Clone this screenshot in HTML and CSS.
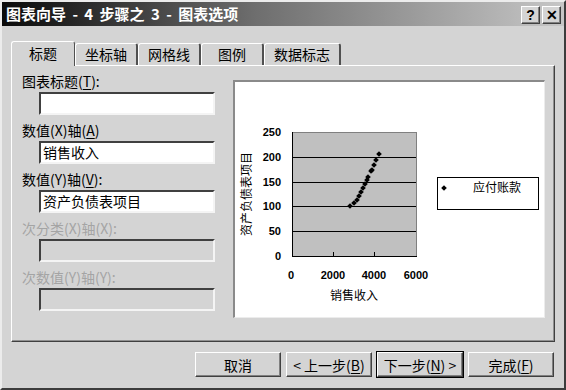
FILE: index.html
```html
<!DOCTYPE html>
<html lang="zh-CN">
<head>
	<meta charset="utf-8">
	<title>图表向导 - 4 步骤之 3 - 图表选项</title>
	<link rel="stylesheet" href="styles.css">
</head>
<body>
	<div class="dialog">
		<div class="titlebar">
			<span class="titlebar__text">图表向导 - 4 步骤之 3 - 图表选项</span>
			<div class="titlebar__buttons">
				<button class="caption-btn">?</button>
				<button class="caption-btn">✕</button>
			</div>
		</div>

		<div class="tabs">
			<div class="tab tab--active">标题</div>
			<div class="tab">坐标轴</div>
			<div class="tab">网格线</div>
			<div class="tab">图例</div>
			<div class="tab">数据标志</div>
		</div>

		<div class="panel">
			<div class="fields">
				<div class="field">
					<label class="field__label">图表标题(<u>T</u>):</label>
					<div class="field__input"></div>
				</div>
				<div class="field">
					<label class="field__label">数值(X)轴(<u>A</u>)</label>
					<div class="field__input">销售收入</div>
				</div>
				<div class="field">
					<label class="field__label">数值(Y)轴(<u>V</u>):</label>
					<div class="field__input">资产负债表项目</div>
				</div>
				<div class="field field--disabled">
					<label class="field__label">次分类(X)轴(X):</label>
					<div class="field__input"></div>
				</div>
				<div class="field field--disabled">
					<label class="field__label">次数值(Y)轴(Y):</label>
					<div class="field__input"></div>
				</div>
			</div>

			<div class="preview">
				<svg class="chart" width="309" height="235" viewBox="0 0 309 235">
					<defs>
						<path id="dot" d="M0,-2.8 L2.8,0 L0,2.8 L-2.8,0 Z" fill="#000"/>
					</defs>
					<!-- plot area -->
					<rect x="57.5" y="50.5" width="124" height="124" fill="#c0c0c0" stroke="#808080"/>
					<g stroke="#000" stroke-width="1">
						<line x1="57" y1="75.5" x2="181" y2="75.5"/>
						<line x1="57" y1="100.5" x2="181" y2="100.5"/>
						<line x1="57" y1="124.5" x2="181" y2="124.5"/>
						<line x1="57" y1="149.5" x2="181" y2="149.5"/>
						<line x1="57.5" y1="50" x2="57.5" y2="175"/>
						<line x1="57" y1="174.5" x2="182" y2="174.5"/>
						<line x1="98.5" y1="170" x2="98.5" y2="174"/>
						<line x1="139.5" y1="170" x2="139.5" y2="174"/>
					</g>
					<g class="chart__num" text-anchor="end">
						<text x="46" y="54">250</text>
						<text x="46" y="79">200</text>
						<text x="46" y="104">150</text>
						<text x="46" y="128">100</text>
						<text x="46" y="153">50</text>
						<text x="46" y="178">0</text>
					</g>
					<g class="chart__num" text-anchor="middle">
						<text x="56" y="197">0</text>
						<text x="98" y="197">2000</text>
						<text x="139" y="197">4000</text>
						<text x="181" y="197">6000</text>
					</g>
					<text class="chart__title" x="119" y="218" text-anchor="middle">销售收入</text>
					<text class="chart__title" transform="translate(16 112) rotate(-90)" text-anchor="middle">资产负债表项目</text>
					<!-- data points -->
					<use href="#dot" x="115" y="124"/>
					<use href="#dot" x="119" y="121"/>
					<use href="#dot" x="122" y="118"/>
					<use href="#dot" x="124" y="114"/>
					<use href="#dot" x="126" y="110"/>
					<use href="#dot" x="128" y="106"/>
					<use href="#dot" x="130" y="102"/>
					<use href="#dot" x="132" y="98"/>
					<use href="#dot" x="133" y="95"/>
					<use href="#dot" x="136" y="89"/>
					<use href="#dot" x="137" y="88"/>
					<use href="#dot" x="139" y="83"/>
					<use href="#dot" x="141" y="78"/>
					<use href="#dot" x="144" y="72"/>
					<!-- legend -->
					<rect x="202.5" y="95.5" width="101" height="32" fill="#fff" stroke="#000"/>
					<use href="#dot" x="209" y="106"/>
					<text class="chart__legend" x="238" y="110">应付账款</text>
				</svg>
			</div>
		</div>

		<div class="buttons">
			<button class="btn">取消</button>
			<button class="btn">&lt; 上一步(<u>B</u>)</button>
			<button class="btn btn--default">下一步(<u>N</u>) &gt;</button>
			<button class="btn">完成(<u>F</u>)</button>
		</div>
	</div>
</body>
</html>
```

FILE: styles.css
```css
/* PAGE */
* {
	box-sizing: border-box;
}
body {
	background: #d4d4d4;
	font-family: "Noto Sans CJK SC", "Liberation Sans", sans-serif;
	font-size: 14px;
	margin: 0;
}
button {
	font-family: inherit;
	font-size: inherit;
	color: #000;
	padding: 0;
}
u {
	text-decoration-thickness: 1px;
	text-underline-offset: 2px;
}

/* WINDOW */
.dialog {
	background: #d4d4d4;
	border: 2px solid;
	border-color: #ececec #3c3c3c #3c3c3c #ececec;
	display: flex;
	flex-direction: column;
	height: 390px;
	width: 566px;
}
.titlebar {
	align-items: center;
	background: linear-gradient(to right, #0a0a0a 0%, #6e6e6e 45%, #c6c6c6 100%);
	display: flex;
	height: 24px;
	justify-content: space-between;
	padding: 0 3px 0 4px;
}
.titlebar__text {
	color: #fff;
	font-size: 15px;
	font-weight: bold;
	line-height: 18px;
	word-spacing: 3px;
}
.titlebar__buttons {
	display: flex;
	gap: 2px;
	margin-top: 2px;
}
.caption-btn {
	background: #d4d4d4;
	border: 1px solid;
	border-color: #fff #404040 #404040 #fff;
	box-shadow: inset -1px -1px 0 #808080;
	font-family: "Liberation Sans", sans-serif;
	font-size: 14px;
	font-weight: bold;
	height: 18px;
	line-height: 14px;
	width: 19px;
}

/* TABS */
.tabs {
	align-items: flex-end;
	display: flex;
	height: 25px;
	margin-top: 14px;
	padding-left: 9px;
	position: relative;
	z-index: 1;
}
.tab {
	background: #d4d4d4;
	border-left: 1px solid #fff;
	border-right: 2px solid #505050;
	border-top: 1px solid #fff;
	border-radius: 3px 3px 0 0;
	height: 22px;
	line-height: 21px;
	min-width: 63px;
	padding: 0 9px;
	text-align: center;
}
.tab--active {
	border-right-width: 1px;
	height: 25px;
	line-height: 23px;
	margin-bottom: -1px;
	min-width: 64px;
}

/* PANEL */
.panel {
	border: 1px solid;
	border-color: #fff #404040 #404040 #fff;
	box-shadow: inset -1px -1px 0 #909090;
	display: flex;
	height: 277px;
	margin-left: 9px;
	width: 544px;
}
.fields {
	display: flex;
	flex-direction: column;
	gap: 7px;
	padding: 7px 0 0 10px;
	width: 221px;
}
.field__label {
	display: block;
	line-height: 16px;
	margin-bottom: 3px;
}
.field__input {
	background: #fff;
	border: 2px solid;
	border-color: #404040 #f4f4f4 #f4f4f4 #404040;
	height: 23px;
	line-height: 18px;
	margin-left: 17px;
	padding-left: 2px;
	width: 176px;
}
.field--disabled .field__label {
	color: #a4a4a4;
}
.field--disabled .field__input {
	background: #d4d4d4;
}

/* CHART PREVIEW */
.preview {
	background: #fff;
	border: 1px solid;
	border-color: #8a8a8a #ececec #ececec #8a8a8a;
	border-width: 2px 1px 1px 2px;
	height: 238px;
	margin-top: 14px;
	width: 312px;
}
.chart {
	display: block;
}
.chart__num {
	font-family: "Liberation Sans", sans-serif;
	font-size: 11px;
	font-weight: bold;
}
.chart__title {
	font-size: 12px;
}
.chart__legend {
	font-size: 12px;
}

/* BUTTON ROW */
.buttons {
	display: flex;
	gap: 5px;
	justify-content: flex-end;
	margin-top: 10px;
	padding-right: 10px;
}
.btn {
	background: #d4d4d4;
	border: 1px solid;
	border-color: #fff #404040 #404040 #fff;
	box-shadow: inset -1px -1px 0 #808080;
	height: 25px;
	line-height: 20px;
	width: 86px;
}
.btn--default {
	box-shadow: inset -1px -1px 0 #808080, 0 0 0 1px #000;
}
```
